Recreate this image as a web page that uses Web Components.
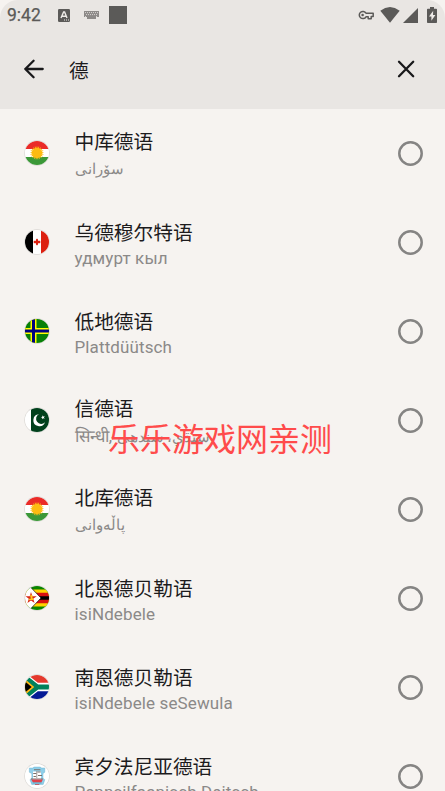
<!DOCTYPE html>
<html lang="zh-CN">
<head>
<meta charset="utf-8">
<title>语言</title>
<style>
html,body{margin:0;height:100%;overflow:hidden;background:#f6f3f0}
body{font-family:Roboto,"Noto Sans CJK SC",sans-serif}
</style>
</head>
<body>
<language-picker></language-picker>
<script>
const define = (name, markup, setup) => customElements.define(name, class extends HTMLElement {
  static observedAttributes = ['country'];
  constructor() {
    super();
    const t = document.createElement('template');
    t.innerHTML = markup;
    this.attachShadow({mode: 'open'}).append(t.content.cloneNode(true));
  }
  connectedCallback() { if (setup) setup(this, this.shadowRoot); }
  attributeChangedCallback() { if (setup) setup(this, this.shadowRoot); }
});

const rays = (() => {
  let p = '';
  for (let i = 0; i < 42; i++) {
    const r = i % 2 ? 4.8 : 7.2, a = i * Math.PI / 21;
    p += (12 + r * Math.sin(a)).toFixed(2) + ',' + (12 - r * Math.cos(a)).toFixed(2) + ' ';
  }
  return p;
})();

const flags = {
  kurdistan: `<path fill="#fff" d="M0 0h24v24H0z"/><path fill="#ea2b28" d="M0 0h24v8H0z"/><path fill="#3b9838" d="M0 16h24v8H0z"/><polygon fill="#fdbb12" points="${rays}"/>`,
  udmurt: `<path fill="#fff" d="M0 0h24v24H0z"/><path d="M0 0h8v24H0z"/><path fill="#dc2010" d="M16 0h8v24h-8z"/><path fill="#dc2010" d="M11 8.5l1 .9 1-.9v2.3l1.2-.1 1.5.4-.8.9.8.9-1.5.4-1.2-.1v2.3l-1-.9-1 .9v-2.3l-1.2.1-1.5-.4.8-.9-.8-.9 1.5-.4 1.2.1z"/>`,
  lowsaxon: `<path fill="#078007" d="M0 0h24v24H0z"/><path fill="#ff0" d="M5.5 0h6v24h-6zM0 9h24v6H0z"/><path fill="#000080" d="M7 0h3v24H7zM0 10.5h24v3H0z"/>`,
  pakistan: `<path fill="#fff" d="M0 0h24v24H0z"/><path fill="#01411c" d="M6 0h18v24H6z"/><path fill="#fff" d="M14 6.2a6 6 0 1 0 6 8 5.1 5.1 0 1 1-6-8zM17.5 7.3l.8 1.2 1.5-.3-.9 1.2.8 1.3-1.5-.5-1 1.1v-1.5l-1.4-.6 1.5-.4z"/>`,
  zimbabwe: `<path fill="#098500" d="M0 0h24v24H0z"/><path fill="#ffd200" d="M0 3.4h24v17.2H0z"/><path fill="#d81010" d="M0 6.8h24v10.4H0z"/><path d="M0 10.3h24v3.5H0z"/><path fill="#fff" stroke="#111" stroke-width=".7" d="M-1-1h4.500L16 12 3.500 25H-1z"/><path fill="#d82a16" d="M6 6l1.400 4.200h4.400l-3.600 2.600 1.400 4.200L6 14.400 2.400 17l1.400-4.200L.5 10.200h4.200z"/><path fill="#ffc61b" d="M5.400 8.500l2.300 1.300-.3 2 1.600 2.300-2.700-.2-2.700.3.8-1.400 1.700-.4-.8-1.700z"/>`,
  southafrica: `<path fill="#fff" d="M0 0h24v24H0z"/><path fill="#e4392d" d="M3 0h21v7.800H12.800z"/><path fill="#041995" d="M3 24h21v-7.800H12.800z"/><path fill="#00805b" d="M0 0l1 0 12.200 9.600H24v4.800H13.200L1 24H0z"/><path fill="#ffb715" d="M0 3.900L9.200 12 0 20.100z"/><path d="M0 6.400L6.700 12 0 17.600z"/>`,
  pennsylvania: `<path fill="#fff" d="M0 0h24v24H0z"/><path fill="#8fcfea" stroke="#65afc9" stroke-width=".4" d="M4.300 4h3.500l1-1h6.600l1 1h3.400v4.200l-1.800 1.400v4.600l1.800 1.500-1.600 4.700H6.700L5 15.700l1.800-1.500V9.600L4.300 8.200z"/><path fill="#fff" d="M8 7.500h8v8H8z"/><path fill="#7a6f6b" d="M9 5.300h6.400v1H9zM8.200 9h3v1h-3zM12.500 7.500h3.200v1h-3.200zM11.500 7h.7v7h-.7zM8.500 12h2.400v1H8.500zM13 11h4v1h-4zM5.900 14.600h12v1h-12z"/><path fill="#df424b" d="M6.200 15.500h11.600l-1.400 2.900H8z"/><path fill="#5fa9c7" d="M7.700 18.400h8.800v1H7.700z"/><path fill="#bd444d" d="M10 20h4.300v.8H10z"/>`
};

define('flag-badge', `<style>
:host{display:block;width:24px;height:24px;border-radius:50%;overflow:hidden;box-shadow:0 0 0 .7px #d9d6d3}
svg{display:block;width:24px;height:24px}
</style><svg viewBox="0 0 24 24"></svg>`, (h, r) => { r.querySelector('svg').innerHTML = flags[h.getAttribute('country')] || ''; });

define('radio-ring', `<style>
:host{display:block;width:25px;height:25px}
svg{display:block}
</style><svg width="25" height="25"><circle cx="12.500" cy="12.500" r="11.200" fill="none" stroke="#858483" stroke-width="2.500"/></svg>`);

define('language-row', `<style>
:host{display:grid;grid-template-columns:24px 1fr 25px;column-gap:25.5px;align-items:center;height:89px;padding:0 22px 1px 25px;box-sizing:border-box}
.text{align-self:start;padding-top:var(--top,20px);white-space:nowrap;min-width:0}
.name{height:26px;font:400 19.7px/26px "Noto Sans CJK SC",sans-serif;color:#1c1b1d}
.native{height:24px;font-size:17px;line-height:24px;color:#8b8988;letter-spacing:.12px;margin-top:var(--gap,1px)}
::slotted(bdi){font-size:15px}
</style>
<flag-badge></flag-badge>
<div class="text"><div class="name"><slot name="name"></slot></div><div class="native"><slot></slot></div></div>
<radio-ring></radio-ring>`, (h, r) => r.querySelector('flag-badge').setAttribute('country', h.getAttribute('flag')));

define('status-bar', `<style>
:host{display:flex;align-items:center;height:30px;padding:0 6px 0 7px;box-sizing:border-box;color:#5b5a58}
.time{font-size:17.5px;font-weight:400;-webkit-text-stroke:.25px #5b5a58;width:51px;line-height:30px}
svg{display:block}.sp{flex:1}
</style>
<span class="time">9:42</span>
<svg width="12" height="13" viewBox="0 0 12 13"><rect width="12" height="13" rx="1.3" fill="#5b5a58"/><path d="M3 9L5.6 3h1L9 9M4 7.3h4" fill="none" stroke="#eeebe8" stroke-width="1.4"/><path d="M6 11h1m1 0h1m1 0h1" stroke="#eeebe8" stroke-width="1"/></svg>
<svg style="margin-left:14px" width="15" height="9" viewBox="0 0 15 9"><path fill="#8d8a88" d="M0 0h15v6h-3v2H3V6H0z"/><path stroke="#e9e6e3" stroke-width=".8" stroke-dasharray="1 1" d="M1 1.6h13M2 3.6h12M1 5.5h2m9 0h2"/></svg>
<svg style="margin-left:10px" width="18" height="18"><path fill="#5b5a58" d="M0 0h18v18H0z"/></svg>
<span class="sp"></span>
<svg width="16" height="10" viewBox="0 0 16 10"><path fill="none" stroke="#5b5a58" stroke-width="1.5" stroke-linejoin="round" d="M8 3.2A3.6 3.6 0 1 0 8 6.8h2.2v2h3V6.4h2V3.2z"/><circle cx="4.6" cy="5" r="1.3" fill="#5b5a58"/></svg>
<svg style="margin-left:6px" width="20" height="16" viewBox="0 0 20 16"><path fill="#5b5a58" d="M.3 3.8Q10-3.6 19.7 3.8L10 15.8z"/></svg>
<svg style="margin-left:3px" width="15" height="15"><path fill="#5b5a58" d="M0 15L15 0v15z"/></svg>
<svg style="margin-left:9px;margin-right:2px" width="10" height="16" viewBox="0 0 10 16"><path fill="#5b5a58" d="M3 0h4v1.7h2.2q.8 0 .8.8v12.7q0 .8-.8.8H.8Q0 16 0 15.2V2.5q0-.8.8-.8H3z"/><path fill="#eeebe8" d="M6.2 3.8L2 9.5h2.4v4.2L8.400 8H6z"/></svg>`);

define('search-bar', `<style>
:host{display:flex;align-items:center;height:79px;padding:0 29px 0 23px;box-sizing:border-box}
.q{flex:1;padding-left:25px;font:400 19.7px/28px "Noto Sans CJK SC",sans-serif;color:#1c1b1d}
svg{display:block;margin-bottom:1px;fill:none;stroke:#19191b;stroke-width:2.3;stroke-linecap:round;stroke-linejoin:round}
</style>
<svg width="21" height="20" viewBox="0 0 21 20"><path d="M19.7 10H2.3M10.6 1.8L2.3 10l8.300 8.200"/></svg>
<span class="q"><slot></slot></span>
<svg width="20" height="20" viewBox="0 0 20 20"><path d="M3 2.8l14.200 14.400M17.200 2.800L3 17.200"/></svg>`);

define('water-mark', `<style>
:host{position:absolute;left:108px;top:414px;font:400 32px/46px "Noto Sans CJK SC",sans-serif;color:#ff4b4b;white-space:nowrap}
</style><slot></slot>`);

define('language-picker', `<style>
:host{display:block;position:relative;width:445px;height:791px;overflow:hidden}
header{height:109px;background:#e9e6e3;border-radius:18px 18px 0 0}
</style>
<header><status-bar></status-bar><search-bar>德</search-bar></header>
<main>
<language-row flag="kurdistan" style="--top:19px;--gap:2px"><span slot="name">中库德语</span><bdi>سۆرانی</bdi></language-row>
<language-row flag="udmurt" style="--top:21px"><span slot="name">乌德穆尔特语</span>удмурт кыл</language-row>
<language-row flag="lowsaxon" style="--top:21px"><span slot="name">低地德语</span>Plattdüütsch</language-row>
<language-row flag="pakistan" style="--top:19px;--gap:3px"><span slot="name">信德语</span>सिन्धी, <bdi>سنڌي، سندھی</bdi></language-row>
<language-row flag="kurdistan" style="--top:19px;--gap:2px"><span slot="name">北库德语</span><bdi>پاڵەوانی</bdi></language-row>
<language-row flag="zimbabwe" style="--top:21px"><span slot="name">北恩德贝勒语</span>isiNdebele</language-row>
<language-row flag="southafrica" style="--top:21px"><span slot="name">南恩德贝勒语</span>isiNdebele seSewula</language-row>
<language-row flag="pennsylvania" style="--top:21px"><span slot="name">宾夕法尼亚德语</span>Pennsilfaanisch Deitsch</language-row>
</main>
<water-mark>乐乐游戏网亲测</water-mark>`);
</script>
</body>
</html>
